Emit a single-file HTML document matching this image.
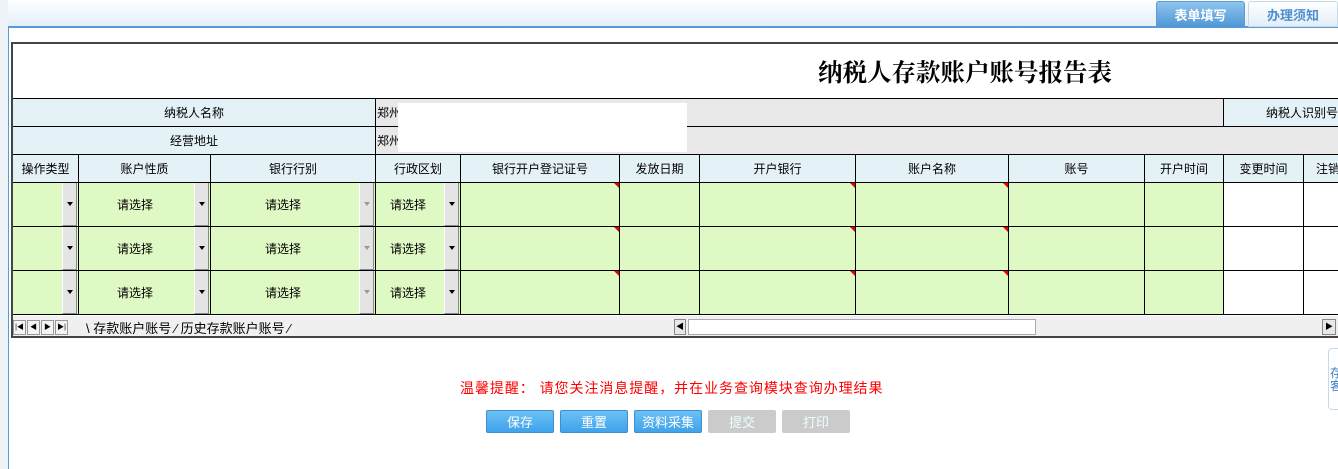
<!DOCTYPE html>
<html><head><meta charset="utf-8"><style>
*{margin:0;padding:0;box-sizing:border-box}
body{width:1338px;height:469px;overflow:hidden;background:#fff;font-family:"Liberation Sans","Noto Sans CJK SC",sans-serif;font-size:12px;position:relative}
.a{position:absolute}
.c{position:absolute;border-right:1px solid #000;border-bottom:1px solid #000;display:flex;align-items:center;justify-content:center;font-size:12px;color:#000;white-space:nowrap;overflow:hidden}
.h{background:#e4f1f6}
.g{background:#dff9c4}
.btn{position:absolute;top:0;width:15px;height:43px;background:#e4e4e4;border-left:1px solid #fff;border-right:1px solid #888;border-bottom:1px solid #888}
.btn:after{content:"";position:absolute;left:4px;top:19px;border-left:3.5px solid transparent;border-right:3.5px solid transparent;border-top:4px solid #000}
.dis:after{border-top-color:#999}
.tri{position:absolute;right:0;top:0;border-left:5px solid transparent;border-top:5px solid #e00}
.b{position:absolute;top:410px;height:23px;width:68px;color:#fff;font-size:13px;display:flex;align-items:center;justify-content:center;border-radius:2px}
.bb{background:linear-gradient(#6cc0f5,#3ea3ea);border:1px solid #3d8fd0}
.bg{background:#cbcbcb;color:#eaffff}
.nb{position:absolute;top:320px;width:13px;height:15px;border:1px solid #999;background:#f4f4f4;font-size:7px;line-height:13px;text-align:center}
</style></head><body>
<div class="a" style="left:0;top:0;width:1338px;height:27px;background:linear-gradient(#fff,#e2eef8)"></div>
<div class="a" style="left:0;top:0;width:8px;height:469px;background:#eef3f8"></div>
<div class="a" style="left:8px;top:26px;width:1330px;height:2px;background:#5b9bd5"></div>
<div class="a" style="left:8px;top:26px;width:1px;height:443px;background:#5b9bd5"></div>
<div class="a" style="left:1156px;top:1px;width:89px;height:27px;background:linear-gradient(#8ec4ef,#4f96d6);border:1px solid #5d9ad2;border-radius:3px 3px 0 0;color:#fff;font-weight:bold;font-size:13px;display:flex;align-items:center;justify-content:center">表单填写</div>
<div class="a" style="left:1248px;top:1px;width:90px;height:26px;background:linear-gradient(#fff,#e3eef8);border:1px solid #c8daea;border-radius:3px 3px 0 0;color:#4f8fd0;font-weight:bold;font-size:13px;display:flex;align-items:center;justify-content:center">办理须知</div>

<div class="a" style="left:11px;top:42px;width:1327px;height:296px;border:1px solid #000;border-width:2px 0 2px 2px;border-color:#444"></div>
<div class="a" style="left:13px;top:44px;width:1325px;height:55px;border-bottom:1px solid #000;display:flex;align-items:center;justify-content:center;padding-left:579px;font-family:'Noto Serif CJK SC',serif;font-weight:bold;font-size:24.5px;white-space:nowrap">纳税人存款账户账号报告表</div>

<div class="c h" style="left:13px;top:99px;width:363px;height:28px">纳税人名称</div>
<div class="c" style="left:376px;top:99px;width:848px;height:28px;background:#e8e8e8;justify-content:flex-start;padding-left:1px">郑州</div>
<div class="c h" style="left:1224px;top:99px;width:114px;height:28px;justify-content:flex-end;border-right:0">纳税人识别号</div>
<div class="c h" style="left:13px;top:127px;width:363px;height:28px">经营地址</div>
<div class="c" style="left:376px;top:127px;width:962px;height:28px;background:#e8e8e8;justify-content:flex-start;padding-left:1px;border-right:0">郑州</div>
<div class="a" style="left:398px;top:103px;width:289px;height:49px;background:#fff"></div>

<div id="rows"></div>
<script>
var B=[12,78,210,375,460,619,699,855,1008,1144,1223,1303,1338];
var H=['操作类型','账户性质','银行行别','行政区划','银行开户登记证号','发放日期','开户银行','账户名称','账号','开户时间','变更时间','注销'];
function L(i){return i==0?13:B[i]+1}
function W(i){return B[i+1]-L(i)+1}
var h='';
for(var i=0;i<12;i++){
 h+='<div class="c h" style="left:'+L(i)+'px;top:155px;width:'+W(i)+'px;height:28px'+(i==11?';justify-content:flex-start;padding-left:12px;border-right:0':'')+'">'+H[i]+'</div>';
}
[183,227,271].forEach(function(t){
 var s=function(i){return 'left:'+L(i)+'px;top:'+t+'px;width:'+W(i)+'px;height:44px'};
 h+='<div class="c g" style="'+s(0)+'"><div class="btn" style="left:49px"></div></div>'+
 '<div class="c g" style="'+s(1)+';justify-content:flex-start;padding-left:38px">请选择<div class="btn" style="left:115px"></div></div>'+
 '<div class="c g" style="'+s(2)+';justify-content:flex-start;padding-left:54px">请选择<div class="btn dis" style="left:148px"></div></div>'+
 '<div class="c g" style="'+s(3)+';justify-content:flex-start;padding-left:14px">请选择<div class="btn" style="left:68px"></div></div>'+
 '<div class="c g" style="'+s(4)+'"><div class="tri"></div></div>'+
 '<div class="c g" style="'+s(5)+'"></div>'+
 '<div class="c g" style="'+s(6)+'"><div class="tri"></div></div>'+
 '<div class="c g" style="'+s(7)+'"><div class="tri"></div></div>'+
 '<div class="c g" style="'+s(8)+'"></div>'+
 '<div class="c g" style="'+s(9)+'"></div>'+
 '<div class="c" style="'+s(10)+'"></div>'+
 '<div class="c" style="'+s(11)+';border-right:0"></div>';});
document.getElementById('rows').innerHTML=h;
</script>

<div class="a" style="left:13px;top:316px;width:1325px;height:20px;background:#f0f0f0"></div>
<div class="nb" style="left:13px">|◀</div>
<div class="nb" style="left:27px">◀</div>
<div class="nb" style="left:41px">▶</div>
<div class="nb" style="left:55px">▶|</div>
<div class="a" style="left:86px;top:318px;font-size:13px;white-space:nowrap">\ 存款账户账号 ∕ 历史存款账户账号 ∕</div>
<div class="a" style="left:674px;top:319px;width:12px;height:16px;background:#e8e8e8;border:1px solid #888;font-size:8px;line-height:14px;text-align:center">◀</div>
<div class="a" style="left:688px;top:319px;width:348px;height:16px;background:#fff;border:1px solid #aaa"></div>
<div class="a" style="left:1322px;top:319px;width:14px;height:16px;background:#e8e8e8;border:1px solid #888;font-size:8px;line-height:14px;text-align:center">▶</div>

<div class="a" style="left:1328px;top:348px;width:14px;height:62px;border:1px solid #c8d8ea;border-radius:4px;color:#3a7cc0;font-size:12px;padding:18px 0 0 1px;line-height:13px">存<br>客</div>

<div class="a" style="left:460px;top:378px;color:#f00;font-size:14px;letter-spacing:0.95px;white-space:nowrap">温馨提醒：&nbsp;请您关注消息提醒，并在业务查询模块查询办理结果</div>
<div class="b bb" style="left:486px">保存</div>
<div class="b bb" style="left:560px">重置</div>
<div class="b bb" style="left:634px">资料采集</div>
<div class="b bg" style="left:708px">提交</div>
<div class="b bg" style="left:782px">打印</div>
</body></html>
